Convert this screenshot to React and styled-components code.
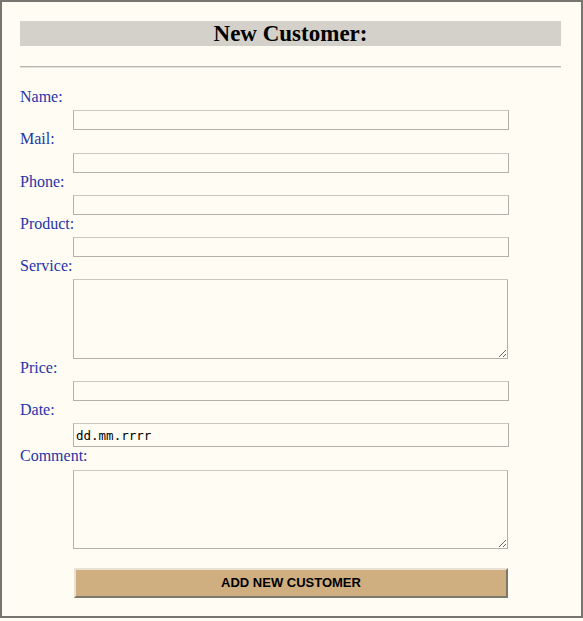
import React from "react";
import styled, { createGlobalStyle } from "styled-components";

const GlobalStyle = createGlobalStyle`
  body {
    margin: 0;
    background: #fffcf4;
    font-family: "Liberation Serif", "Times New Roman", serif;
  }
`;

const Frame = styled.div`
  box-sizing: border-box;
  width: 583px;
  height: 618px;
  border: 2px solid #77756f;
  background: #fffcf4;
  padding: 19px 20px 19px 18px;
`;

const Heading = styled.h2`
  margin: 0;
  height: 25px;
  line-height: 25px;
  background: #d4d1ca;
  color: #000;
  text-align: center;
  font-size: 23px;
  font-weight: bold;
`;

const Rule = styled.hr`
  margin: 20px 0 20px;
  height: 0;
  border: none;
  border-top: 1px solid #b9b7b0;
  border-bottom: 1px solid #e2e0d9;
`;

const Form = styled.form`
  display: flex;
  flex-direction: column;
`;

const Label = styled.label`
  display: block;
  color: #2535a8;
  font-size: 16px;
  line-height: 18.25px;
  margin-bottom: 4px;
`;

const Input = styled.input`
  box-sizing: border-box;
  display: block;
  margin: 0 0 0 53px;
  width: 436px;
  height: ${(p) => (p.$tall ? "24px" : "20px")};
  padding: 1px 2px;
  border: 1px solid #b3b1aa;
  border-top-color: #c9c7c0;
  background: #fffcf4;
  font-family: "DejaVu Sans Mono", "Liberation Mono", monospace;
  font-size: 12.5px;
  color: #000;
  outline: none;
`;

const TextArea = styled.textarea`
  box-sizing: border-box;
  display: block;
  margin: 0 0 0 53px;
  width: 435px;
  height: 79.5px;
  border: 1px solid #b3b1aa;
  border-top-color: #c9c7c0;
  background: #fffcf4;
  outline: none;
`;

const Submit = styled.button`
  box-sizing: border-box;
  margin: 18.5px 0 0 54px;
  width: 434px;
  height: 30px;
  background: #cfae7f;
  border: 2px solid;
  border-color: #e9e1d4 #7d786c #7d786c #e9e1d4;
  font-family: "Liberation Sans", Arial, sans-serif;
  font-size: 13px;
  font-weight: bold;
  color: #000;
  cursor: pointer;
`;

const fields = [
  { name: "Name:" },
  { name: "Mail:" },
  { name: "Phone:" },
  { name: "Product:" },
  { name: "Service:", area: true },
  { name: "Price:" },
  { name: "Date:", date: true },
  { name: "Comment:", area: true },
];

const App = () => {
  return (
    <>
      <GlobalStyle />
      <Frame>
        <Heading>New Customer:</Heading>
        <Rule />
        <Form onSubmit={(e) => e.preventDefault()}>
          {fields.map((f) => (
            <React.Fragment key={f.name}>
              <Label>{f.name}</Label>
              {f.area ? (
                <TextArea />
              ) : f.date ? (
                <Input $tall readOnly value="dd.mm.rrrr" />
              ) : (
                <Input />
              )}
            </React.Fragment>
          ))}
          <Submit type="submit">ADD NEW CUSTOMER</Submit>
        </Form>
      </Frame>
    </>
  );
};

export default App;
